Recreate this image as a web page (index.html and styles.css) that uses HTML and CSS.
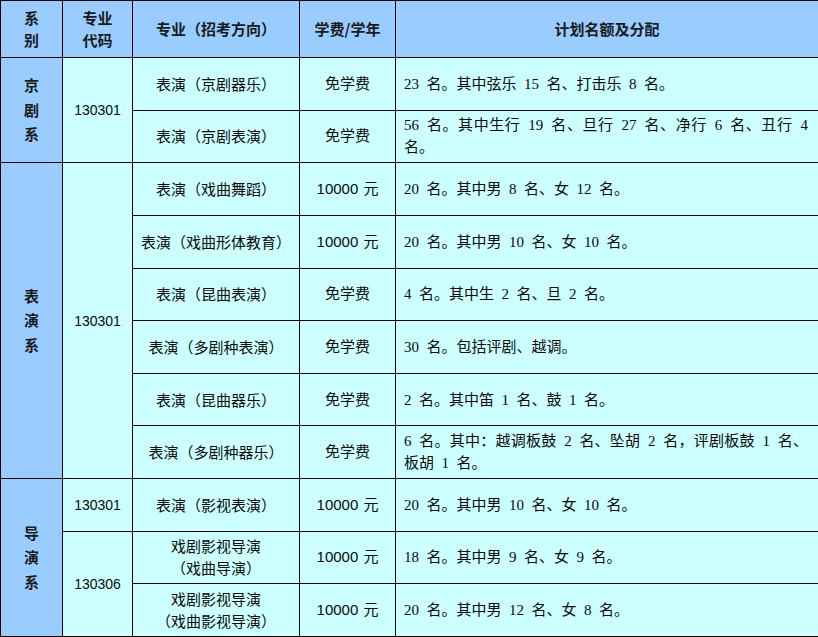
FILE: index.html
```html
<!DOCTYPE html>
<html lang="zh-CN">
<head>
<meta charset="utf-8">
<title>招生计划</title>
<link rel="stylesheet" href="styles.css">
</head>
<body>
<table class="plan">
  <colgroup>
    <col class="c-dept">
    <col class="c-code">
    <col class="c-major">
    <col class="c-fee">
    <col class="c-quota">
  </colgroup>
  <thead>
    <tr class="head">
      <th>系<br>别</th>
      <th>专业<br>代码</th>
      <th>专业（招考方向）</th>
      <th>学费/学年</th>
      <th>计划名额及分配</th>
    </tr>
  </thead>
  <tbody>
    <tr>
      <td class="dept" rowspan="2">京<br>剧<br>系</td>
      <td class="code" rowspan="2">130301</td>
      <td class="major">表演（京剧器乐）</td>
      <td class="fee">免学费</td>
      <td class="quota">23 名。其中弦乐 15 名、打击乐 8 名。</td>
    </tr>
    <tr>
      <td class="major">表演（京剧表演）</td>
      <td class="fee">免学费</td>
      <td class="quota">56 名。其中生行 19 名、旦行 27 名、净行 6 名、丑行 4 名。</td>
    </tr>
    <tr>
      <td class="dept" rowspan="6">表<br>演<br>系</td>
      <td class="code" rowspan="6">130301</td>
      <td class="major">表演（戏曲舞蹈）</td>
      <td class="fee">10000 元</td>
      <td class="quota">20 名。其中男 8 名、女 12 名。</td>
    </tr>
    <tr>
      <td class="major">表演（戏曲形体教育）</td>
      <td class="fee">10000 元</td>
      <td class="quota">20 名。其中男 10 名、女 10 名。</td>
    </tr>
    <tr>
      <td class="major">表演（昆曲表演）</td>
      <td class="fee">免学费</td>
      <td class="quota">4 名。其中生 2 名、旦 2 名。</td>
    </tr>
    <tr>
      <td class="major">表演（多剧种表演）</td>
      <td class="fee">免学费</td>
      <td class="quota">30 名。包括评剧、越调。</td>
    </tr>
    <tr>
      <td class="major">表演（昆曲器乐）</td>
      <td class="fee">免学费</td>
      <td class="quota">2 名。其中笛 1 名、鼓 1 名。</td>
    </tr>
    <tr>
      <td class="major">表演（多剧种器乐）</td>
      <td class="fee">免学费</td>
      <td class="quota">6 名。其中：越调板鼓 2 名、坠胡 2 名，评剧板鼓 1 名、板胡 1 名。</td>
    </tr>
    <tr>
      <td class="dept" rowspan="3">导<br>演<br>系</td>
      <td class="code">130301</td>
      <td class="major">表演（影视表演）</td>
      <td class="fee">10000 元</td>
      <td class="quota">20 名。其中男 10 名、女 10 名。</td>
    </tr>
    <tr>
      <td class="code" rowspan="2">130306</td>
      <td class="major">戏剧影视导演<br>（戏曲导演）</td>
      <td class="fee">10000 元</td>
      <td class="quota">18 名。其中男 9 名、女 9 名。</td>
    </tr>
    <tr>
      <td class="major">戏剧影视导演<br>（戏曲影视导演）</td>
      <td class="fee">10000 元</td>
      <td class="quota">20 名。其中男 12 名、女 8 名。</td>
    </tr>
  </tbody>
</table>
</body>
</html>
```

FILE: styles.css
```css
html, body {
  margin: 0;
  padding: 0;
  background: #ffffff;
}

.plan {
  width: 818px;
  table-layout: fixed;
  border-collapse: collapse;
  font-family: "Noto Sans CJK SC", sans-serif;
  font-size: 15px;
  color: #0a0a0a;
}

.c-dept { width: 62px; }
.c-code { width: 70px; }
.c-major { width: 167px; }
.c-fee { width: 96px; }
.c-quota { width: 423px; }

.plan th,
.plan td {
  border: 1px solid #000000;
  padding: 0;
  vertical-align: middle;
  text-align: center;
  line-height: 22px;
}

.head {
  height: 57px;
}

.head th {
  background: #99ccff;
  font-weight: 700;
  color: #1a1a1a;
}

.plan tbody tr {
  height: 52.64px;
}

.plan td {
  background: #ccffff;
  font-weight: 400;
}

.plan td.dept {
  background: #99ccff;
  font-weight: 700;
  line-height: 24.5px;
  color: #1a1a1a;
}

.code,
.fee {
  font-family: "Liberation Sans", "Noto Sans CJK SC", sans-serif;
  word-spacing: 1px;
}

.code {
  font-size: 14px;
}

.major {
  padding-right: 8px;
}

.plan td.quota {
  font-family: "Liberation Serif", "Noto Sans CJK SC", serif;
  word-spacing: 3.75px;
  text-align: justify;
  padding: 0 10px 0 8px;
}
```
